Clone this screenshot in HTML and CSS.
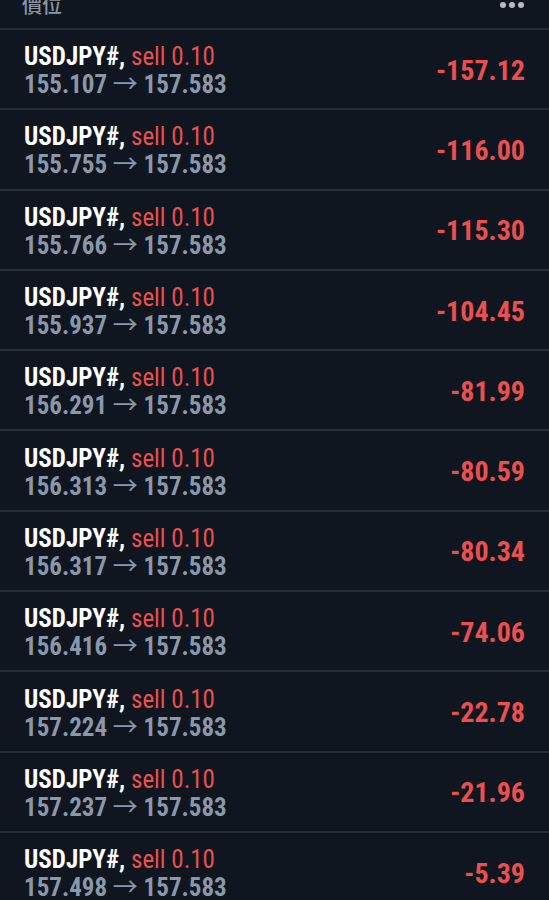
FILE: index.html
```html
<!DOCTYPE html>
<html lang="zh-Hant">
<head>
    <meta charset="UTF-8">
    <meta name="viewport" content="width=device-width, initial-scale=1.0">
    <title>價位</title>
    <link rel="stylesheet" href="styles.css">
</head>
<body>
    <div class="header">
        <span class="header-title">價位</span>
        <span class="more"><i></i><i></i><i></i></span>
    </div>

    <ul class="positions">
        <li class="position">
            <div class="info">
                <div class="line1"><span class="symbol">USDJPY#,</span> <span class="side">sell 0.10</span></div>
                <div class="line2">155.107 <span class="arrow">&rarr;</span> 157.583</div>
            </div>
            <div class="profit">-157.12</div>
        </li>
        <li class="position">
            <div class="info">
                <div class="line1"><span class="symbol">USDJPY#,</span> <span class="side">sell 0.10</span></div>
                <div class="line2">155.755 <span class="arrow">&rarr;</span> 157.583</div>
            </div>
            <div class="profit">-116.00</div>
        </li>
        <li class="position">
            <div class="info">
                <div class="line1"><span class="symbol">USDJPY#,</span> <span class="side">sell 0.10</span></div>
                <div class="line2">155.766 <span class="arrow">&rarr;</span> 157.583</div>
            </div>
            <div class="profit">-115.30</div>
        </li>
        <li class="position">
            <div class="info">
                <div class="line1"><span class="symbol">USDJPY#,</span> <span class="side">sell 0.10</span></div>
                <div class="line2">155.937 <span class="arrow">&rarr;</span> 157.583</div>
            </div>
            <div class="profit">-104.45</div>
        </li>
        <li class="position">
            <div class="info">
                <div class="line1"><span class="symbol">USDJPY#,</span> <span class="side">sell 0.10</span></div>
                <div class="line2">156.291 <span class="arrow">&rarr;</span> 157.583</div>
            </div>
            <div class="profit">-81.99</div>
        </li>
        <li class="position">
            <div class="info">
                <div class="line1"><span class="symbol">USDJPY#,</span> <span class="side">sell 0.10</span></div>
                <div class="line2">156.313 <span class="arrow">&rarr;</span> 157.583</div>
            </div>
            <div class="profit">-80.59</div>
        </li>
        <li class="position">
            <div class="info">
                <div class="line1"><span class="symbol">USDJPY#,</span> <span class="side">sell 0.10</span></div>
                <div class="line2">156.317 <span class="arrow">&rarr;</span> 157.583</div>
            </div>
            <div class="profit">-80.34</div>
        </li>
        <li class="position">
            <div class="info">
                <div class="line1"><span class="symbol">USDJPY#,</span> <span class="side">sell 0.10</span></div>
                <div class="line2">156.416 <span class="arrow">&rarr;</span> 157.583</div>
            </div>
            <div class="profit">-74.06</div>
        </li>
        <li class="position">
            <div class="info">
                <div class="line1"><span class="symbol">USDJPY#,</span> <span class="side">sell 0.10</span></div>
                <div class="line2">157.224 <span class="arrow">&rarr;</span> 157.583</div>
            </div>
            <div class="profit">-22.78</div>
        </li>
        <li class="position">
            <div class="info">
                <div class="line1"><span class="symbol">USDJPY#,</span> <span class="side">sell 0.10</span></div>
                <div class="line2">157.237 <span class="arrow">&rarr;</span> 157.583</div>
            </div>
            <div class="profit">-21.96</div>
        </li>
        <li class="position">
            <div class="info">
                <div class="line1"><span class="symbol">USDJPY#,</span> <span class="side">sell 0.10</span></div>
                <div class="line2">157.498 <span class="arrow">&rarr;</span> 157.583</div>
            </div>
            <div class="profit">-5.39</div>
        </li>
    </ul>
</body>
</html>
```

FILE: styles.css
```css
body {
    margin: 0;
    background-color: #0f1620;
    font-family: "Roboto Condensed", Roboto, "Noto Sans CJK TC", sans-serif;
    font-stretch: 75%;
    color: #ffffff;
    overflow: hidden;
}

.header {
    height: 28px;
    display: flex;
    justify-content: space-between;
    padding: 0 25px 0 22px;
    border-bottom: 2px solid #252c37;
    overflow: hidden;
}
.header-title {
    font-family: "Noto Sans CJK TC", sans-serif;
    font-size: 20px;
    line-height: 20px;
    margin-top: -5px;
    color: #8b95a3;
    font-weight: 500;
}
.more {
    display: flex;
    gap: 3px;
    margin-top: 2px;
}
.more i {
    width: 6px;
    height: 6px;
    border-radius: 50%;
    background-color: #b3bbc7;
}

.positions {
    list-style: none;
    margin: 0;
    padding: 0;
}
.position {
    height: 78.3px;
    display: flex;
    align-items: center;
    justify-content: space-between;
    padding: 0 24px;
    border-bottom: 2px solid #252c37;
}
.info {
    font-size: 25px;
    line-height: 28px;
    padding-top: 4px;
}
.symbol {
    font-weight: 700;
}
.side {
    color: #ec4f4f;
}
.line2 {
    font-weight: 700;
    color: #8a98aa;
}
.arrow {
    font-weight: 400;
}
.profit {
    font-size: 28px;
    font-weight: 700;
    color: #ec4f4f;
    padding-top: 2px;
}
```
